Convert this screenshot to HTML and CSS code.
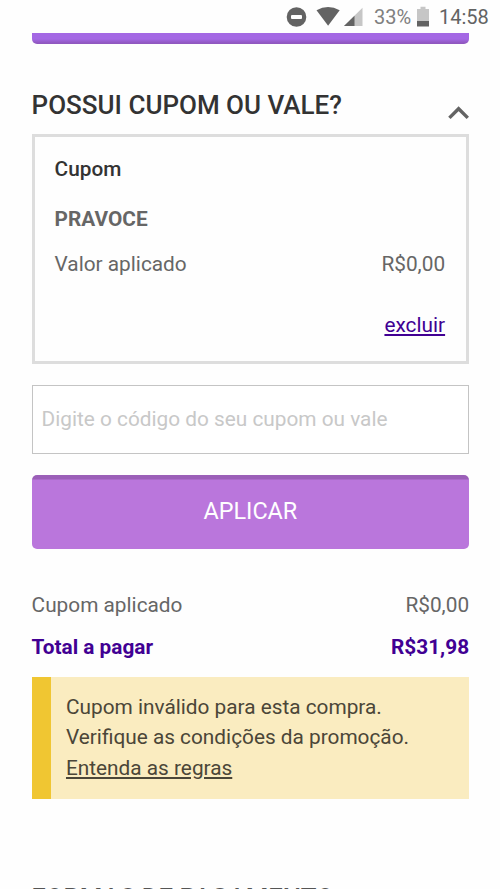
FILE: index.html
```html
<!DOCTYPE html>
<html lang="pt-BR">
<head>
<meta charset="utf-8">
<title>Cupom ou vale</title>
<link rel="stylesheet" href="styles.css">
</head>
<body>
<header class="status">
  <svg class="status-icons" width="80" height="33" viewBox="0 0 80 33">
    <circle cx="10.5" cy="17" r="9.8" fill="#636363"/>
    <rect x="5" y="15" width="11" height="4" rx="1" fill="#fff"/>
    <path d="M30.5 10.3Q42 3.5 53.7 10.3L42.1 25.7Z" fill="#636363"/>
    <path d="M76.5 7.8V26H58Z" fill="#c6c6c6"/>
    <path d="M68.5 15.7V26H58Z" fill="#636363"/>
  </svg>
  <span class="percent">33%</span>
  <svg class="battery" width="12" height="33" viewBox="0 0 12 33">
    <path d="M3.5 6.7h5v2.3H12V21H0V9h3.5Z" fill="#c6c6c6"/>
    <path d="M0 21h12v5.5H0Z" fill="#636363"/>
  </svg>
  <span class="clock">14:58</span>
</header>
<main class="page">
  <div class="button-edge"></div>
  <div class="heading">
    <h2 class="title">POSSUI CUPOM OU VALE?</h2>
    <svg class="chevron" width="22" height="15" viewBox="0 0 22 15"><path d="M2.4 12.9 11.6 3.7l9.2 9.2" fill="none" stroke="#636363" stroke-width="3.4"/></svg>
  </div>
  <section class="coupon">
    <h3 class="coupon-title">Cupom</h3>
    <strong class="code">PRAVOCE</strong>
    <div class="row"><span class="valor">Valor aplicado</span><span>R$0,00</span></div>
    <a class="remove" href="#">excluir</a>
  </section>
  <input class="field" type="text" placeholder="Digite o código do seu cupom ou vale">
  <button class="apply" type="button">APLICAR</button>
  <div class="row applied"><span class="label">Cupom aplicado</span><span>R$0,00</span></div>
  <div class="row total"><span class="label">Total a pagar</span><span>R$31,98</span></div>
  <div class="alert">
    <p class="line">Cupom inválido para esta compra.</p>
    <p class="line">Verifique as condições da promoção.</p>
    <a class="rules" href="#">Entenda as regras</a>
  </div>
  <h2 class="title next">FORMAS DE PAGAMENTO</h2>
</main>
</body>
</html>
```
FILE: styles.css
```css
* { box-sizing: border-box; }
body {
  margin: 0;
  height: 889px;
  overflow: hidden;
  background: #fefefe;
  color: #666;
  font: 20.8px/30px Roboto, sans-serif;
}
h2, h3, p { margin: 0; }
.status {
  display: flex;
  height: 33px;
  padding-left: 286px;
  line-height: 35px;
  font-size: 20px;
}
.percent { width: 43px; margin-left: 8px; color: #808080; white-space: nowrap; }
.clock { margin-left: 10px; color: #636363; white-space: nowrap; }
.page { width: 437.5px; margin-left: 31.6px; }
.button-edge {
  height: 11px;
  border-radius: 0 0 5px 5px;
  background: linear-gradient(#a468e4 0 6px, #9058c0 10px);
}
.heading { display: flex; justify-content: space-between; height: 89.5px; padding-top: 46px; }
.title { font-size: 26px; line-height: 30px; font-weight: 500; color: #333; white-space: nowrap; }
.chevron { margin-top: 15px; }
.coupon {
  display: flex;
  flex-direction: column;
  height: 230px;
  padding: 17px 21px 0 20px;
  border: 3px solid #ddd;
}
.coupon-title { font-size: 20.8px; font-weight: 500; color: #333; }
.code { margin-top: 20px; font-weight: 700; }
.row { display: flex; justify-content: space-between; }
.coupon .row { margin-top: 15px; }
.remove { align-self: flex-end; margin-top: 31px; color: #410093; }
a { text-decoration-thickness: 1.5px; text-underline-offset: 2px; }
.field {
  display: block;
  width: 100%;
  height: 69px;
  margin-top: 21.5px;
  padding: 0 9px 1px;
  border: 1px solid #c4c4c4;
  background: #fff;
  font: 20.8px Roboto, sans-serif;
}
.field::placeholder { color: #c8c8c8; }
.apply {
  display: block;
  width: 100%;
  height: 73.5px;
  margin-top: 21px;
  padding: 0;
  border: 0;
  border-radius: 5px;
  background: linear-gradient(#9b5fb8 0 4px, #ba76dc 5px);
  color: #fff;
  font: 23.4px/73px Roboto, sans-serif;
}
.applied { margin-top: 41.5px; }
.total { margin-top: 12px; font-weight: 700; color: #410093; }
.alert {
  height: 122px;
  margin-top: 14.7px;
  padding: 15px 0 0 15.4px;
  border-left: 19.5px solid #f0c632;
  background: #faecc0;
  color: #4b4638;
  line-height: 30.5px;
}
.rules { color: inherit; }
.next { margin-top: 84px; color: #555; font-size: 25.8px; }
```
